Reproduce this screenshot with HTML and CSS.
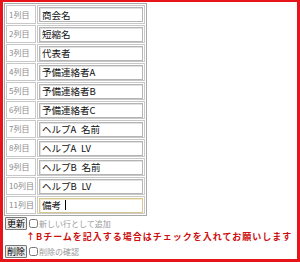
FILE: index.html
```html
<!DOCTYPE html>
<html lang="ja">
<head>
  <meta charset="UTF-8" />
  <title>列設定</title>
  <link rel="stylesheet" href="styles.css">
</head>
<body>
  <div class="frame">
    <form class="col-form" onsubmit="return false;">
      <table class="col-table">
        <tr><td class="col-no">1列目</td><td><input type="text" value="商会名"></td></tr>
        <tr><td class="col-no">2列目</td><td><input type="text" value="短縮名"></td></tr>
        <tr><td class="col-no">3列目</td><td><input type="text" value="代表者"></td></tr>
        <tr><td class="col-no">4列目</td><td><input type="text" value="予備連絡者A"></td></tr>
        <tr><td class="col-no">5列目</td><td><input type="text" value="予備連絡者B"></td></tr>
        <tr><td class="col-no">6列目</td><td><input type="text" value="予備連絡者C"></td></tr>
        <tr><td class="col-no">7列目</td><td><input type="text" value="ヘルプA&ensp;名前"></td></tr>
        <tr><td class="col-no">8列目</td><td><input type="text" value="ヘルプA&ensp;LV"></td></tr>
        <tr><td class="col-no">9列目</td><td><input type="text" value="ヘルプB&ensp;名前"></td></tr>
        <tr><td class="col-no">10列目</td><td><input type="text" value="ヘルプB&ensp;LV"></td></tr>
        <tr><td class="col-no">11列目</td><td><input type="text" class="focused" value="備考 "><span class="caret"></span></td></tr>
      </table>

      <div class="action-row">
        <button type="button" class="btn">更新</button>
        <label class="check"><input type="checkbox">新しい行として追加</label>
      </div>
      <p class="notice">↑Bチームを記入する場合はチェックを入れてお願いします</p>
      <div class="action-row">
        <button type="button" class="btn">削除</button>
        <label class="check"><input type="checkbox">削除の確認</label>
      </div>
    </form>
  </div>
</body>
</html>
```
FILE: styles.css
```css
html, body {
  margin: 0;
  padding: 0;
  background: #fff;
}

body {
  font-family: "Noto Sans CJK JP", "DejaVu Sans", sans-serif;
  font-size: 9px;
  line-height: 12px;
}

/* red outer frame */
.frame {
  box-sizing: border-box;
  width: 300px;
  height: 262px;
  border: 3px solid #e8141c;
  border-top-width: 2px;
  padding: 1px 0 0 1px;
  overflow: hidden;
}

.col-form {
  margin: 0;
}

/* column table */
.col-table {
  border: 1px solid #a8a8a8;
  border-spacing: 1px;
}

.col-table td {
  border: 1px solid #c8c8c8;
  padding: 0 1px;
  height: 16px;
  line-height: 16px;
  position: relative;
}

.col-table tr:first-child td {
  height: 17px;
}

.col-table .col-no {
  width: 26px;
  color: #8a8a8a;
  font-size: 8px;
  padding: 0 0 0 2px;
  white-space: nowrap;
}

.col-table input {
  box-sizing: border-box;
  display: block;
  width: 104px;
  height: 15px;
  margin: 0;
  padding: 0 2px;
  border: 1px solid #b4b4b4;
  box-shadow: inset 1px 1px 0 #e2e2e2;
  font-family: inherit;
  font-size: 9.5px;
  color: #111;
  outline: none;
}

.col-table input.focused {
  border-color: #d8c890;
  box-shadow: inset 1px 1px 0 #f2ead0;
}

.caret {
  position: absolute;
  left: 27px;
  top: 3px;
  width: 1px;
  height: 10px;
  background: #000;
}

/* buttons and checks */
.action-row {
  display: flex;
  align-items: center;
  height: 13px;
  margin-top: 1px;
  padding-left: 1px;
}

.btn {
  box-sizing: border-box;
  height: 13px;
  padding: 0 1px;
  margin: 0 2px 0 0;
  border: 1px solid #777;
  border-radius: 1px;
  background: #ececec;
  font-family: inherit;
  font-size: 9px;
  line-height: 10px;
  color: #000;
}

.check {
  display: flex;
  align-items: center;
  color: #9a9a9a;
  font-size: 8px;
}

.check input {
  width: 9px;
  height: 9px;
  margin: 0 1px 0 0;
}

.notice {
  margin: 0 0 2px 22px;
  color: #cc1010;
  font-weight: bold;
  font-size: 9px;
  letter-spacing: 1px;
  line-height: 13px;
  white-space: nowrap;
}
```
